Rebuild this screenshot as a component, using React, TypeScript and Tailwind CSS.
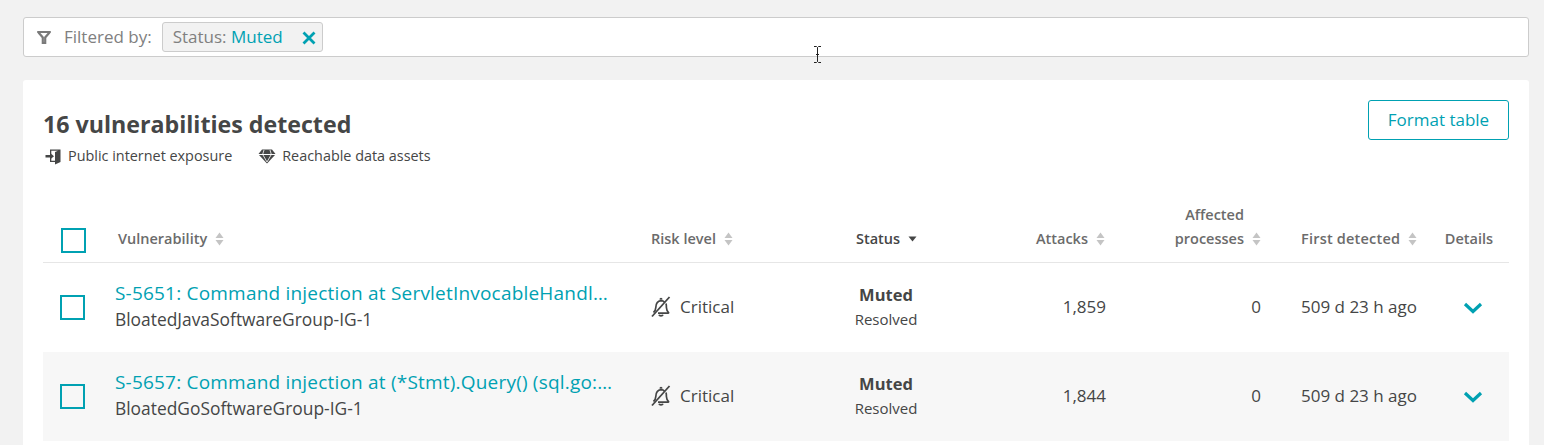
import React from "react";

const GRID = "grid grid-cols-[72px_536px_170px_130px_155px_155px_40px_129px_79px]";

function SortIcon() {
  return (
    <svg width="9" height="14" viewBox="0 0 9 14" className="ml-2 shrink-0" fill="#c4c4c4">
      <path d="M4.5 0.5 8.5 6H0.5Z" />
      <path d="M4.5 13.5 8.5 8H0.5Z" />
    </svg>
  );
}

function Bell() {
  return (
    <svg width="20" height="22" viewBox="0 0 20 22" fill="none" stroke="#454646" strokeWidth="1.7" className="shrink-0">
      <path d="M2.5 16.5c1.6-1.4 2.2-2.7 2.3-5 .1-3 .5-6.2 5.2-6.8 1.6.1 2.7.6 3.5 1.4" />
      <path d="M15 7.5c.3 1 .4 2.4.4 4 .1 2.3.7 3.6 2.1 5 .2.3.1.6-.3.6H7" />
      <path d="M8 18.8c.5 1.4 3.5 1.4 4 0" />
      <path d="M9.2 3.6c.1-1.3 1.5-1.3 1.6 0" />
      <path d="M1 20.5 18.5 1" strokeWidth="1.8" />
    </svg>
  );
}

function Chevron() {
  return (
    <svg width="20" height="12" viewBox="0 0 20 12" fill="none" stroke="#00a1b2" strokeWidth="3.2">
      <path d="M2 2l8 7.5L18 2" />
    </svg>
  );
}

function Row({ title, sub, attacks, shaded }: { title: string; sub: string; attacks: string; shaded?: boolean }) {
  return (
    <div className={`${GRID} h-[89px] items-center text-[#454646] ${shaded ? "bg-[#f7f7f7]" : ""}`}>
      <div className="pl-[17px]">
        <div className="w-[25px] h-[25px] border-2 border-[#00a1b2] -mt-px" />
      </div>
      <div className="min-w-0 pr-[36px] pb-[4px]">
        <div className="text-[19px] leading-[27px] text-[#00a1b2] truncate whitespace-nowrap tracking-[0.2px]">{title}</div>
        <div className="text-[17.4px] leading-[25px] whitespace-nowrap">{sub}</div>
      </div>
      <div className="flex items-center gap-[9px] -mt-[2px]">
        <Bell />
        <span className="text-[17px]">Critical</span>
      </div>
      <div className="text-center">
        <div className="text-[16.5px] leading-[24px] font-bold">Muted</div>
        <div className="text-[15px] leading-[25px]">Resolved</div>
      </div>
      <div className="text-right text-[17px] -mt-[2px]">{attacks}</div>
      <div className="text-right text-[17px] -mt-[2px]">0</div>
      <div />
      <div className="text-[17px] -mt-[2px] whitespace-nowrap">509 d 23 h ago</div>
      <div className="flex justify-center pl-[6px] mt-px">
        <Chevron />
      </div>
    </div>
  );
}

function Head({ label, align = "start" }: { label: React.ReactNode; align?: "start" | "end" | "center" }) {
  const j = align === "end" ? "justify-end" : align === "center" ? "justify-center" : "justify-start";
  return (
    <div className={`flex items-end ${j} text-[14.5px] leading-[24px] font-semibold text-[#6b6b6b] text-right whitespace-nowrap`}>
      {label}
    </div>
  );
}

export default function App() {
  return (
    <div
      className="relative w-[1544px] h-[445px] overflow-hidden bg-[#f2f2f2] px-[23px] pt-[17px]"
      style={{ fontFamily: '"Open Sans", "Noto Sans", sans-serif' }}
    >
      <div className="h-[40px] w-[1506px] bg-white border border-[#cccccc] rounded-[3px] flex items-center pl-[12px]">
        <svg width="16" height="15" viewBox="0 0 16 15" fill="none" stroke="#7a7a7a" strokeWidth="2.2" className="shrink-0">
          <path d="M1.2 2h13.6M2.5 2.5 6.8 7.5v5.5h2.4V7.5L13.5 2.5" />
        </svg>
        <span className="ml-[12px] text-[17px] text-[#808080]">Filtered by:</span>
        <div className="ml-[10px] h-[30px] w-[161px] bg-[#f2f2f2] border border-[#cccccc] rounded-[3px] flex items-center pl-[10px] text-[17px] whitespace-nowrap">
          <span className="text-[#808080]">Status:&nbsp;</span>
          <span className="text-[#00a1b2]">Muted</span>
          <svg width="14" height="14" viewBox="0 0 14 14" stroke="#00a1b2" strokeWidth="2.8" className="ml-auto mr-[6px] mt-[1px]">
            <path d="M1.5 1.5l11 11M12.5 1.5l-11 11" />
          </svg>
        </div>
      </div>

      <div className="mt-[23px] w-[1506px] bg-white rounded-[3px] px-[20px] pt-[20px] pb-[20px]">
        <div className="flex justify-between items-start">
          <div className="pt-[8px]">
            <h1 className="text-[23.2px] leading-[32px] font-bold text-[#454646] whitespace-nowrap">16 vulnerabilities detected</h1>
            <div className="flex items-center mt-[4px] text-[14.4px] leading-[24px] text-[#454646] whitespace-nowrap">
              <svg width="16" height="17" viewBox="0 0 16 17" fill="#454646" className="ml-[2px] shrink-0">
                <path d="M5 1.5h10.5V14L10 16.5V14H5V10h1.3v2.7H10V4L13 2.8H6.3V6H5Z" />
                <path d="M0.5 7h4.5V4.8L9 8.2 5 11.6V9.4H.5Z" />
              </svg>
              <span className="ml-[7px]">Public internet exposure</span>
              <svg width="18" height="15" viewBox="0 0 18 15" fill="#454646" className="ml-[26px] shrink-0">
                <path d="M4 0.5h10L17.5 5H.5Z" />
                <path d="M1 6h16L9 14.5Z" />
                <path d="M6 1 4.8 5M12 1l1.2 4M5 6l4 7 4-7" stroke="#ffffff" strokeWidth="0.8" fill="none" />
              </svg>
              <span className="ml-[6px]">Reachable data assets</span>
            </div>
          </div>
          <button className="h-[40px] w-[141px] border border-[#00a1b2] rounded-[3px] text-[#00a1b2] text-[17px] bg-white">
            Format table
          </button>
        </div>

        <div className={`${GRID} mt-[25px] h-[70px] pb-[11px] border-b border-[#e6e6e6] items-end`}>
          <div className="pl-[18px] -mb-[2px]">
            <div className="w-[25px] h-[25px] border-2 border-[#00a1b2]" />
          </div>
          <div className="pl-[3px]">
            <Head label={<span className="flex items-center">Vulnerability<SortIcon /></span>} />
          </div>
          <Head label={<span className="flex items-center">Risk level<SortIcon /></span>} />
          <Head
            align="center"
            label={
              <span className="flex items-center text-[#454646] pl-[1px]">
                Status
                <svg width="9" height="6" viewBox="0 0 9 6" fill="#454646" className="ml-[8px]">
                  <path d="M0.5 0.5h8L4.5 5.5Z" />
                </svg>
              </span>
            }
          />
          <Head align="end" label={<span className="flex items-center pr-px">Attacks<SortIcon /></span>} />
          <Head
            align="end"
            label={
              <span className="flex flex-col items-end">
                <span className="pr-[17px]">Affected</span>
                <span className="flex items-center">processes<SortIcon /></span>
              </span>
            }
          />
          <div />
          <Head label={<span className="flex items-center tracking-[0.2px]">First detected<SortIcon /></span>} />
          <div className="flex justify-center pr-[1px] text-[14.5px] leading-[24px] font-semibold text-[#6b6b6b]">Details</div>
        </div>

        <Row title="S-5651: Command injection at ServletInvocableHandlerMethod.invokeAndHandle()" sub="BloatedJavaSoftwareGroup-IG-1" attacks="1,859" />
        <Row title="S-5657: Command injection at (*Stmt).Query() (sql.go:1234) in database/sql" sub="BloatedGoSoftwareGroup-IG-1" attacks="1,844" shaded />
      </div>

      <svg width="9" height="17" viewBox="0 0 9 17" fill="none" stroke="#222222" strokeWidth="1" className="absolute left-[813px] top-[46px]">
        <path d="M1 .5h2.5l1 1 1-1H8M4.5 1.5v14M1 16.5h2.5l1-1 1 1H8M3 8.5h3" />
      </svg>
    </div>
  );
}
